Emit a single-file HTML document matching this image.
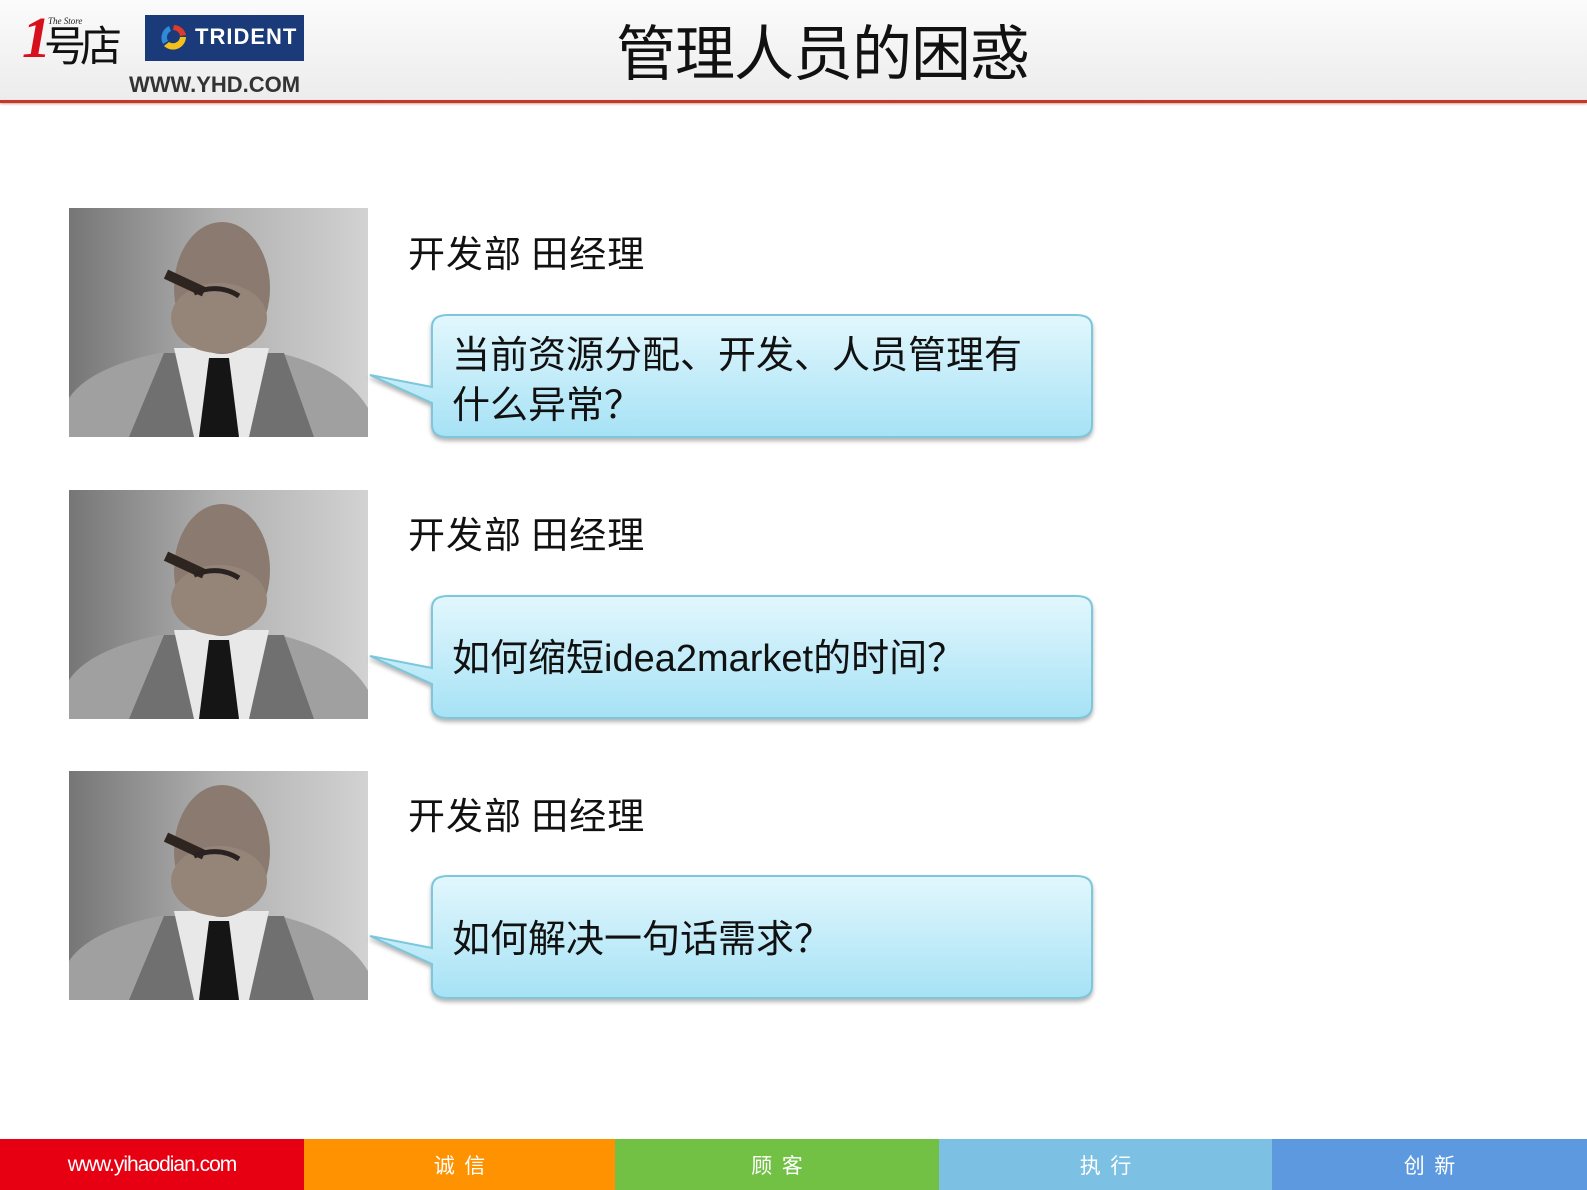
<!DOCTYPE html>
<html><head><meta charset="utf-8"><style>
*{margin:0;padding:0;box-sizing:border-box}
body{width:1587px;height:1190px;position:relative;background:#fff;font-family:"Liberation Sans","Noto Sans CJK SC",sans-serif;overflow:hidden}
.hdr{position:absolute;left:0;top:0;width:1587px;height:101px;background:linear-gradient(#fbfbfb,#ececec)}
.redline{position:absolute;left:0;top:100px;width:1587px;height:3px;background:#c0392b;box-shadow:0 1px 2px #d99}
.title{position:absolute;left:600px;top:6px;width:445px;text-align:center;font-size:60px;color:#111;font-family:"Noto Sans CJK SC",sans-serif;font-weight:400;letter-spacing:-1px}
.photo{position:absolute;left:69px;width:299px;height:229px}
.lbl{position:absolute;left:408px;font-size:37px;color:#111;font-family:"Noto Sans CJK SC",sans-serif;letter-spacing:1px}
.bub{position:absolute;left:368px;width:730px;height:130px}
.btxt{position:absolute;left:452px;font-size:38px;line-height:50px;color:#111;font-family:"Liberation Sans","Noto Sans CJK SC",sans-serif;width:605px}
.ft{position:absolute;top:1139px;height:51px;color:#fff;font-size:21px;display:flex;align-items:center;justify-content:center;font-family:"Noto Sans CJK SC",sans-serif}
</style></head><body>
<div class="hdr"></div>
<div class="redline"></div>
<div style="position:absolute;left:22px;top:4px;font:bold italic 58px 'Liberation Serif',serif;color:#d8101c">1</div>
<div style="position:absolute;left:48px;top:16px;font:italic 9px 'Liberation Serif',serif;color:#222">The Store</div>
<div style="position:absolute;left:44px;top:22px;font-size:42px;line-height:44px;color:#111;font-family:'Noto Sans CJK SC',sans-serif;letter-spacing:-6px">号店</div>
<div style="position:absolute;left:145px;top:15px;width:159px;height:46px;background:#1b3a7a;color:#fff;font:bold 22px 'Liberation Sans',sans-serif;letter-spacing:1px;padding:9px 0 0 50px">TRIDENT</div>
<svg style="position:absolute;left:158px;top:22px" width="32" height="32" viewBox="0 0 32 32"><path d="M16 3a13 13 0 0 1 12 10l-6 1a7 7 0 0 0-7-6z" fill="#e03a2a"/><path d="M28 15a13 13 0 0 1-22 9l5-4a7 7 0 0 0 11-5z" fill="#f2c21b"/><path d="M5 22a13 13 0 0 1 6-18l2 5a7 7 0 0 0-3 10z" fill="#2f8ad8"/></svg>
<div style="position:absolute;left:129px;top:72px;font:bold 22px 'Liberation Sans',sans-serif;color:#333">WWW.YHD.COM</div>
<div class="title">管理人员的困惑</div>

<svg width="0" height="0" style="position:absolute"><defs>
<linearGradient id="bg" x1="0" x2="1"><stop offset="0" stop-color="#767676"/><stop offset=".5" stop-color="#b0b0b0"/><stop offset="1" stop-color="#d2d2d2"/></linearGradient>
<linearGradient id="bb" x1="0" y1="0" x2="0" y2="1"><stop offset="0" stop-color="#e2f7fd"/><stop offset="1" stop-color="#a6e2f5"/></linearGradient>
<symbol id="man" viewBox="0 0 299 229">
<rect width="299" height="229" fill="url(#bg)"/>
<path d="M0 229 L0 190 Q20 160 90 145 L210 145 Q275 160 299 200 L299 229Z" fill="#a0a0a0"/>
<path d="M95 145 L215 145 L245 229 L60 229Z" fill="#707070"/>
<path d="M105 140 L200 140 L180 229 L125 229Z" fill="#e8e8e8"/>
<path d="M140 150 L160 150 L170 229 L130 229Z" fill="#151515"/>
<ellipse cx="153" cy="80" rx="48" ry="66" fill="#8a7a70"/>
<ellipse cx="150" cy="110" rx="48" ry="35" fill="#958579"/>
<rect x="95" y="70" width="42" height="10" transform="rotate(25 116 75)" fill="#2e2420"/>
<path d="M125 85 Q150 75 170 88" stroke="#2a2220" stroke-width="5" fill="none"/>
</symbol>
<symbol id="bubble" viewBox="0 0 730 130">
<path d="M64 14 Q64 2 80 2 L708 2 Q724 2 724 14 L724 112 Q724 124 708 124 L80 124 Q64 124 64 112 L64 90 L2 62 L64 74Z" fill="url(#bb)" stroke="#7cc7dc" stroke-width="2"/>
</symbol>
</defs></svg>

<svg class="photo" style="top:208px"><use href="#man" width="299" height="229"/></svg>
<svg class="photo" style="top:490px"><use href="#man" width="299" height="229"/></svg>
<svg class="photo" style="top:771px"><use href="#man" width="299" height="229"/></svg>

<div class="lbl" style="top:224px">开发部 田经理</div>
<div class="lbl" style="top:505px">开发部 田经理</div>
<div class="lbl" style="top:786px">开发部 田经理</div>

<svg class="bub" style="top:313px;filter:drop-shadow(0 3px 2px rgba(0,0,0,.3))"><use href="#bubble" width="730" height="130"/></svg>
<svg class="bub" style="top:594px;filter:drop-shadow(0 3px 2px rgba(0,0,0,.3))"><use href="#bubble" width="730" height="130"/></svg>
<svg class="bub" style="top:874px;filter:drop-shadow(0 3px 2px rgba(0,0,0,.3))"><use href="#bubble" width="730" height="130"/></svg>

<div class="btxt" style="top:331px">当前资源分配、开发、人员管理有什么异常？</div>
<div class="btxt" style="top:634px">如何缩短idea2market的时间？</div>
<div class="btxt" style="top:915px">如何解决一句话需求？</div>

<div class="ft" style="left:0;width:304px;background:#e60012;font-family:'Liberation Sans',sans-serif;letter-spacing:-1px">www.yihaodian.com</div>
<div class="ft" style="left:304px;width:311px;background:#ff9200">诚&nbsp;&nbsp;信</div>
<div class="ft" style="left:615px;width:324px;background:#72c044">顾&nbsp;&nbsp;客</div>
<div class="ft" style="left:939px;width:333px;background:#7cc0e3">执&nbsp;&nbsp;行</div>
<div class="ft" style="left:1272px;width:315px;background:#5d99df">创&nbsp;&nbsp;新</div>
</body></html>
